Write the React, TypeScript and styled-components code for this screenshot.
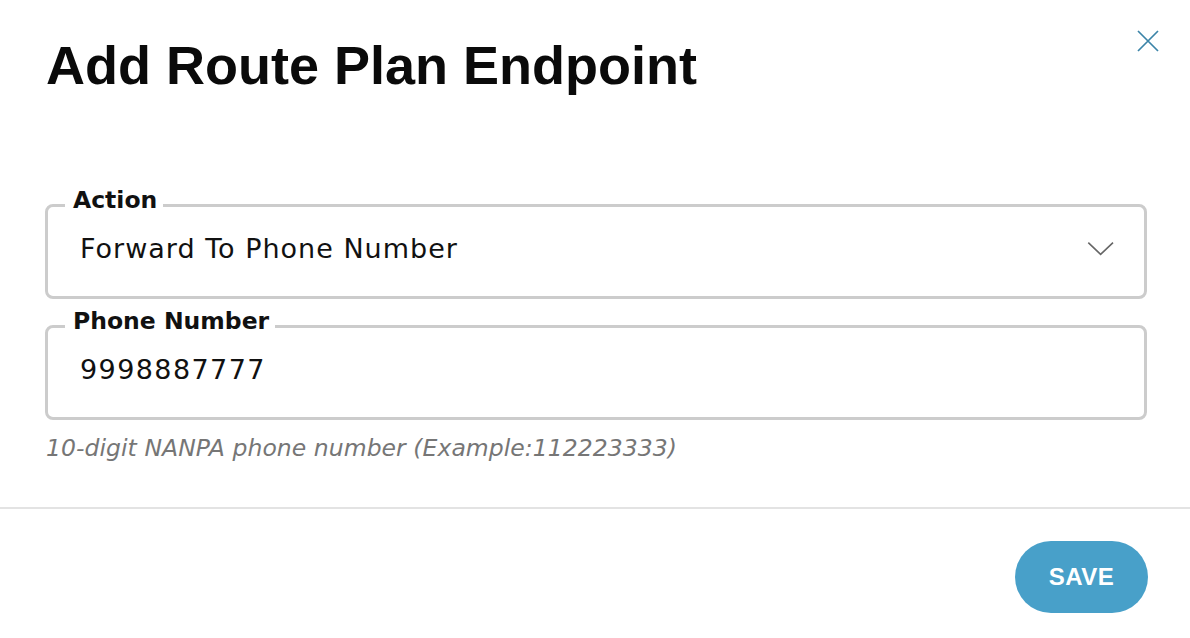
import * as React from "react";
import styled, { createGlobalStyle } from "styled-components";

const GlobalStyle = createGlobalStyle`
  html, body {
    margin: 0;
    padding: 0;
    background: #ffffff;
  }
  body {
    font-family: "DejaVu Sans", "Liberation Sans", sans-serif;
    color: #111111;
  }
  * {
    box-sizing: border-box;
  }
`;

const Modal = styled.div`
  width: 1190px;
  height: 638px;
  background: #ffffff;
  display: flex;
  flex-direction: column;
`;

const Header = styled.header`
  display: flex;
  justify-content: space-between;
  align-items: flex-start;
  padding: 30px 31px 0 46px;
  height: 93px;
`;

const Title = styled.h1`
  margin: 8px 0 0;
  font-family: "Liberation Sans", Arial, sans-serif;
  font-size: 54px;
  line-height: 54px;
  font-weight: 700;
  color: #0a0a0a;
`;

const CloseButton = styled.button`
  border: 0;
  padding: 0;
  background: none;
  width: 22px;
  height: 22px;
  cursor: pointer;
  color: #3b84a8;
  display: block;
`;

const Body = styled.div`
  padding: 111px 43px 0 45px;
  display: flex;
  flex-direction: column;
`;

const Field = styled.div<{ $gap?: number }>`
  position: relative;
  margin-top: ${(p) => p.$gap ?? 0}px;
  height: 95px;
  border: 3px solid #cccccc;
  border-radius: 8px;
`;

const Label = styled.label`
  position: absolute;
  top: -19px;
  left: 17px;
  padding: 0 6px 0 8px;
  background: #ffffff;
  font-size: 23.5px;
  line-height: 24px;
  font-weight: 700;
  color: #111111;
`;

const Row = styled.div`
  display: flex;
  align-items: center;
  justify-content: space-between;
  height: 100%;
  padding: 0 30px 6px 32px;
`;

const Value = styled.span<{ $spacing?: number }>`
  font-size: 27px;
  line-height: 34px;
  letter-spacing: ${(p) => p.$spacing ?? 1}px;
  color: #111111;
`;

const Chevron = styled.svg`
  flex: none;
`;

const Helper = styled.p`
  margin: 13px 0 0 1px;
  font-size: 23.5px;
  line-height: 30px;
  font-style: italic;
  letter-spacing: 0.05px;
  color: #767676;
`;

const Divider = styled.hr`
  margin: 44px 0 0;
  border: 0;
  height: 2px;
  background: #e3e3e3;
`;

const Footer = styled.footer`
  display: flex;
  justify-content: flex-end;
  padding: 32px 42px 0 0;
`;

const SaveButton = styled.button`
  width: 133px;
  height: 72px;
  border: 0;
  border-radius: 36px;
  background: #48a0c9;
  color: #ffffff;
  font-family: "Liberation Sans", Arial, sans-serif;
  font-size: 24px;
  font-weight: 700;
  letter-spacing: 0.5px;
  cursor: pointer;
`;

export default function App() {
  return (
    <Modal>
      <GlobalStyle />
      <Header>
        <Title>Add Route Plan Endpoint</Title>
        <CloseButton aria-label="Close">
          <svg width="22" height="22" viewBox="0 0 22 22">
            <path
              d="M1 1 L21 21 M21 1 L1 21"
              stroke="currentColor"
              strokeWidth="1.7"
              fill="none"
            />
          </svg>
        </CloseButton>
      </Header>
      <Body>
        <Field>
          <Label>Action</Label>
          <Row>
            <Value>Forward To Phone Number</Value>
            <Chevron width="27" height="15" viewBox="0 0 27 15">
              <path
                d="M1.3 1.7 L13.6 13.3 L26 1.7"
                stroke="#666666"
                strokeWidth="1.6"
                fill="none"
              />
            </Chevron>
          </Row>
        </Field>
        <Field $gap={26}>
          <Label>Phone Number</Label>
          <Row>
            <Value $spacing={1.4}>9998887777</Value>
          </Row>
        </Field>
        <Helper>10-digit NANPA phone number (Example:112223333)</Helper>
      </Body>
      <Divider />
      <Footer>
        <SaveButton>SAVE</SaveButton>
      </Footer>
    </Modal>
  );
}
